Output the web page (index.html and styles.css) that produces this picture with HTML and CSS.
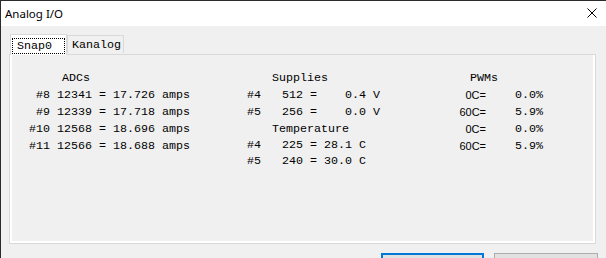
FILE: index.html
```html
<!DOCTYPE html>
<html lang="en">
<head>
    <meta charset="UTF-8">
    <title>Analog I/O</title>
    <link rel="stylesheet" href="styles.css">
</head>
<body>
    <div class="window">
        <div class="titlebar">
            <span class="title">Analog I/O</span>
            <svg class="close" width="10" height="10" viewBox="0 0 10 10">
                <path d="M0.5 0.5 L9.5 9.5 M9.5 0.5 L0.5 9.5" stroke="#000" stroke-width="1" fill="none"/>
            </svg>
        </div>

        <div class="client">
            <div class="tabs">
                <div class="tab active"><span class="focus">Snap0</span></div>
                <div class="tab">Kanalog</div>
            </div>

            <div class="page">
                <div class="page-inner">
                    <div class="col adcs">
                        <div class="head">ADCs</div>
                        <div class="line"> #8 12341 = 17.726 amps</div>
                        <div class="line"> #9 12339 = 17.718 amps</div>
                        <div class="line">#10 12568 = 18.696 amps</div>
                        <div class="line">#11 12566 = 18.688 amps</div>
                    </div>

                    <div class="col supplies">
                        <div class="head">Supplies</div>
                        <div class="line">#4   512 =    0.4 V</div>
                        <div class="line">#5   256 =    0.0 V</div>
                        <div class="temps">
                            <div class="head">Temperature</div>
                            <div class="line">#4   225 = 28.1 C</div>
                            <div class="line">#5   240 = 30.0 C</div>
                        </div>
                    </div>

                    <div class="col pwms">
                        <div class="head">PWMs</div>
                        <div class="pwm-row"><span class="pwm-label">0C=</span><span class="pwm-val">0.0%</span></div>
                        <div class="pwm-row"><span class="pwm-label">60C=</span><span class="pwm-val">5.9%</span></div>
                        <div class="pwm-row"><span class="pwm-label">0C=</span><span class="pwm-val">0.0%</span></div>
                        <div class="pwm-row"><span class="pwm-label">60C=</span><span class="pwm-val">5.9%</span></div>
                    </div>
                </div>
            </div>

            <div class="buttons">
                <button class="btn default"></button>
                <button class="btn"></button>
            </div>
        </div>
    </div>
</body>
</html>
```

FILE: styles.css
```css
html, body {
    margin: 0;
    padding: 0;
    width: 606px;
    height: 258px;
    overflow: hidden;
    background: #f0f0f0;
}

.window {
    width: 605px;
    height: 257px;
    overflow: hidden;
    border-top: 1px solid #2b2b2b;
    border-left: 1px solid #2b2b2b;
    background: #f0f0f0;
    font-family: 'Liberation Mono', 'Courier New', monospace;
    font-size: 11.67px;
    color: #000;
}

.titlebar {
    height: 25px;
    background: #fff;
    display: flex;
    align-items: center;
    justify-content: space-between;
    padding: 0 9px 0 4px;
}

.title {
    font-family: 'Noto Sans', 'Segoe UI', sans-serif;
    font-size: 11.5px;
    color: #000;
    margin-top: -1px;
}

.close {
    display: block;
    margin-top: -2px;
}

.client {
    padding-top: 8px;
}

.tabs {
    display: flex;
    align-items: flex-end;
    margin-left: 9px;
    margin-bottom: -1px;
    position: relative;
    z-index: 1;
}

.tab {
    box-sizing: border-box;
    height: 18px;
    padding: 0 0 0 4px;
    width: 57px;
    border: 1px solid #d9d9d9;
    border-bottom: none;
    background: #f0f0f0;
    line-height: 19px;
    margin-bottom: 2px;
}

.tab.active {
    width: 57px;
    height: 21px;
    padding: 3px 1px 0 1px;
    background: #fff;
    margin-bottom: 0;
}

.focus {
    display: block;
    box-sizing: border-box;
    height: 16px;
    border: 1px dotted #000;
    padding-left: 4px;
    line-height: 14px;
}

.page {
    box-sizing: border-box;
    margin-left: 8px;
    width: 587px;
    height: 190px;
    border: 1px solid #d9d9d9;
}

.page-inner {
    box-sizing: border-box;
    height: 100%;
    border: 2px solid #fff;
    border-top: none;
    display: flex;
    padding-top: 15px;
    padding-left: 17px;
}

.col .line,
.col .head {
    white-space: pre;
    line-height: 17px;
}

.adcs {
    width: 218px;
}

.adcs .head {
    padding-left: 33px;
}

.supplies {
    width: 199px;
}

.supplies .head {
    padding-left: 25px;
}

.supplies .temps .line,
.supplies .temps .head {
    line-height: 16px;
}

.pwms .head {
    padding-left: 24px;
}

.pwm-row {
    display: flex;
    line-height: 17px;
}

.pwm-label {
    width: 40px;
    text-align: right;
    font-family: 'Liberation Sans', Arial, sans-serif;
    font-size: 11px;
}

.pwm-val {
    padding-left: 29px;
}

.buttons {
    display: flex;
    justify-content: flex-end;
    gap: 10px;
    margin-top: 9px;
    padding-right: 8px;
}

.btn {
    box-sizing: border-box;
    width: 104px;
    height: 23px;
    background: #e1e1e1;
    border: 1px solid #adadad;
    padding: 0;
}

.btn.default {
    width: 103px;
    border: 2px solid #0078d7;
}
```
